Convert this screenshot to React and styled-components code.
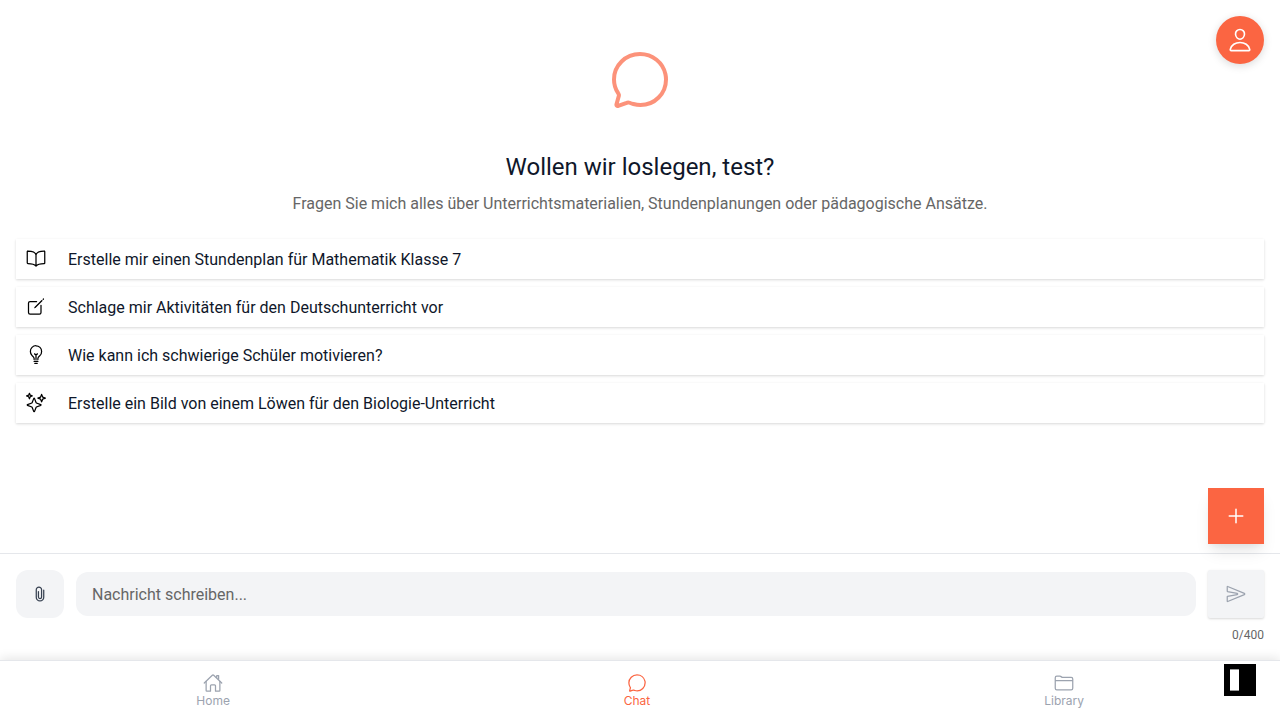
import React from 'react';
import styled, { createGlobalStyle } from 'styled-components';
import {
  IoChatbubbleOutline, IoPersonOutline, IoBookOutline, IoCreateOutline, IoBulbOutline,
  IoSparklesOutline, IoAddOutline, IoAttachOutline, IoSendOutline, IoHomeOutline, IoFolderOutline,
} from 'react-icons/io5';

const GlobalStyle = createGlobalStyle`
  * { box-sizing: border-box; }
  body { margin: 0; background: #fff; font-family: Roboto, "Liberation Sans", sans-serif; }
  button { font: inherit; border: 0; padding: 0; }
  svg { display: block; flex: none; }
`;

const Page = styled.div`
  position: relative;
  display: flex;
  flex-direction: column;
  height: 100vh;
  overflow: hidden;
  background: #fff;
`;

const Content = styled.main`
  flex: 1;
  min-height: 0;
  padding: 48px 16px 0;
  display: flex;
  flex-direction: column;
`;

const HeroIcon = styled.div`
  display: flex;
  justify-content: center;
  color: #fb6542;
  opacity: 0.7;
`;

const Title = styled.h1`
  margin: 39px 0 0;
  font-size: 24px;
  line-height: 32px;
  font-weight: 400;
  text-align: center;
  color: #0f172a;
`;

const Subtitle = styled.p`
  margin: 8px 0 0;
  font-size: 16px;
  line-height: 26px;
  text-align: center;
  color: #666;
`;

const Prompts = styled.div`
  display: flex;
  flex-direction: column;
  gap: 8px;
  margin-top: 22px;
`;

const Prompt = styled.button`
  display: flex;
  align-items: center;
  gap: 22px;
  height: 40px;
  padding: 0 10px;
  background: #fff;
  color: #0f172a;
  font-size: 16px;
  text-align: left;
  box-shadow: 0 1px 3px rgba(0, 0, 0, 0.1), 0 1px 2px rgba(0, 0, 0, 0.06);

  svg { color: #000; transform: translateY(-0.5px); }
`;

const ProfileButton = styled.button`
  position: absolute;
  top: 16px;
  right: 16px;
  width: 48px;
  height: 48px;
  border-radius: 50%;
  display: grid;
  place-items: center;
  background: #fb6542;
  color: #fff;
  box-shadow: 0 2px 8px rgba(0, 0, 0, 0.15);
`;

const AddButton = styled.button`
  position: absolute;
  top: 488px;
  right: 16px;
  width: 56px;
  height: 56px;
  display: grid;
  place-items: center;
  background: #fb6542;
  color: #fff;
  box-shadow: 0 10px 15px -3px rgba(0, 0, 0, 0.1), 0 4px 6px -2px rgba(0, 0, 0, 0.05);
`;

const Composer = styled.section`
  height: 107px;
  padding: 16px 16px 0;
  border-top: 1px solid #e5e7eb;
`;

const ComposerRow = styled.div`
  display: flex;
  align-items: center;
  height: 48px;
  gap: 12px;
`;

const AttachButton = styled.button`
  width: 48px;
  height: 48px;
  border-radius: 12px;
  display: grid;
  place-items: center;
  background: #f3f4f6;
  color: #374151;
`;

const MessageInput = styled.input`
  flex: 1;
  height: 44px;
  padding: 0 16px;
  border: 0;
  border-radius: 12px;
  background: #f3f4f6;
  font: 400 16px Roboto, "Liberation Sans", sans-serif;
  outline: none;

  &::placeholder { color: #666; opacity: 1; }
`;

const SendButton = styled.button`
  width: 56px;
  height: 48px;
  border-radius: 2px;
  display: grid;
  place-items: center;
  background: #f3f4f6;
  color: #9ca3af;
  box-shadow: 0 1px 3px rgba(0, 0, 0, 0.1), 0 1px 2px rgba(0, 0, 0, 0.06);
`;

const Counter = styled.div`
  margin-top: 9px;
  text-align: right;
  font-size: 12px;
  line-height: 16px;
  color: #666;
`;

const TabBar = styled.nav`
  position: relative;
  display: flex;
  justify-content: space-around;
  height: 60px;
  padding: 12px 0 0;
  background: #fff;
  border-top: 1px solid #e5e7eb;
  box-shadow: 0 -2px 10px rgba(0, 0, 0, 0.1);
`;

const Tab = styled.a`
  display: flex;
  flex-direction: column;
  align-items: center;
  font: 400 12px/15px Inter, "Liberation Sans", sans-serif;
  color: ${({ $active }) => ($active ? '#fb6542' : '#9ca3af')};

  &:first-child { margin: 0 0.4px 0 -0.4px; }
  &:last-child { margin: 0 -0.7px 0 0.7px; }
`;

const PanelToggle = styled.button`
  position: absolute;
  right: 24px;
  bottom: 24px;
  display: flex;
  align-items: flex-start;
  width: 32px;
  height: 32px;
  padding: 5px 6px;
  background: #000;
`;

const PanelMark = styled.span`
  width: 9px;
  height: 22px;
  background: #fff;
  border: solid #999;
  border-width: 1px 0;
`;

const prompts = [
  [IoBookOutline, 'Erstelle mir einen Stundenplan für Mathematik Klasse 7'],
  [IoCreateOutline, 'Schlage mir Aktivitäten für den Deutschunterricht vor'],
  [IoBulbOutline, 'Wie kann ich schwierige Schüler motivieren?'],
  [IoSparklesOutline, 'Erstelle ein Bild von einem Löwen für den Biologie-Unterricht'],
];

const tabs = [
  [IoHomeOutline, 'Home'],
  [IoChatbubbleOutline, 'Chat'],
  [IoFolderOutline, 'Library'],
];

export default function App() {
  return (
    <Page>
      <GlobalStyle />
      <Content>
        <HeroIcon><IoChatbubbleOutline size={64} /></HeroIcon>
        <Title>Wollen wir loslegen, test?</Title>
        <Subtitle>Fragen Sie mich alles über Unterrichtsmaterialien, Stundenplanungen oder pädagogische Ansätze.</Subtitle>
        <Prompts>
          {prompts.map(([Icon, label]) => (
            <Prompt key={label}><Icon size={20} />{label}</Prompt>
          ))}
        </Prompts>
      </Content>
      <Composer>
        <ComposerRow>
          <AttachButton aria-label="Datei anhängen"><IoAttachOutline size={20} /></AttachButton>
          <MessageInput placeholder="Nachricht schreiben..." />
          <SendButton aria-label="Senden"><IoSendOutline size={20} /></SendButton>
        </ComposerRow>
        <Counter>0/400</Counter>
      </Composer>
      <TabBar>
        {tabs.map(([Icon, label]) => (
          <Tab key={label} $active={label === 'Chat'}><Icon size={20} />{label}</Tab>
        ))}
      </TabBar>
      <ProfileButton aria-label="Profil"><IoPersonOutline size={26} /></ProfileButton>
      <AddButton aria-label="Neu"><IoAddOutline size={24} /></AddButton>
      <PanelToggle aria-label="Panel"><PanelMark /></PanelToggle>
    </Page>
  );
}
